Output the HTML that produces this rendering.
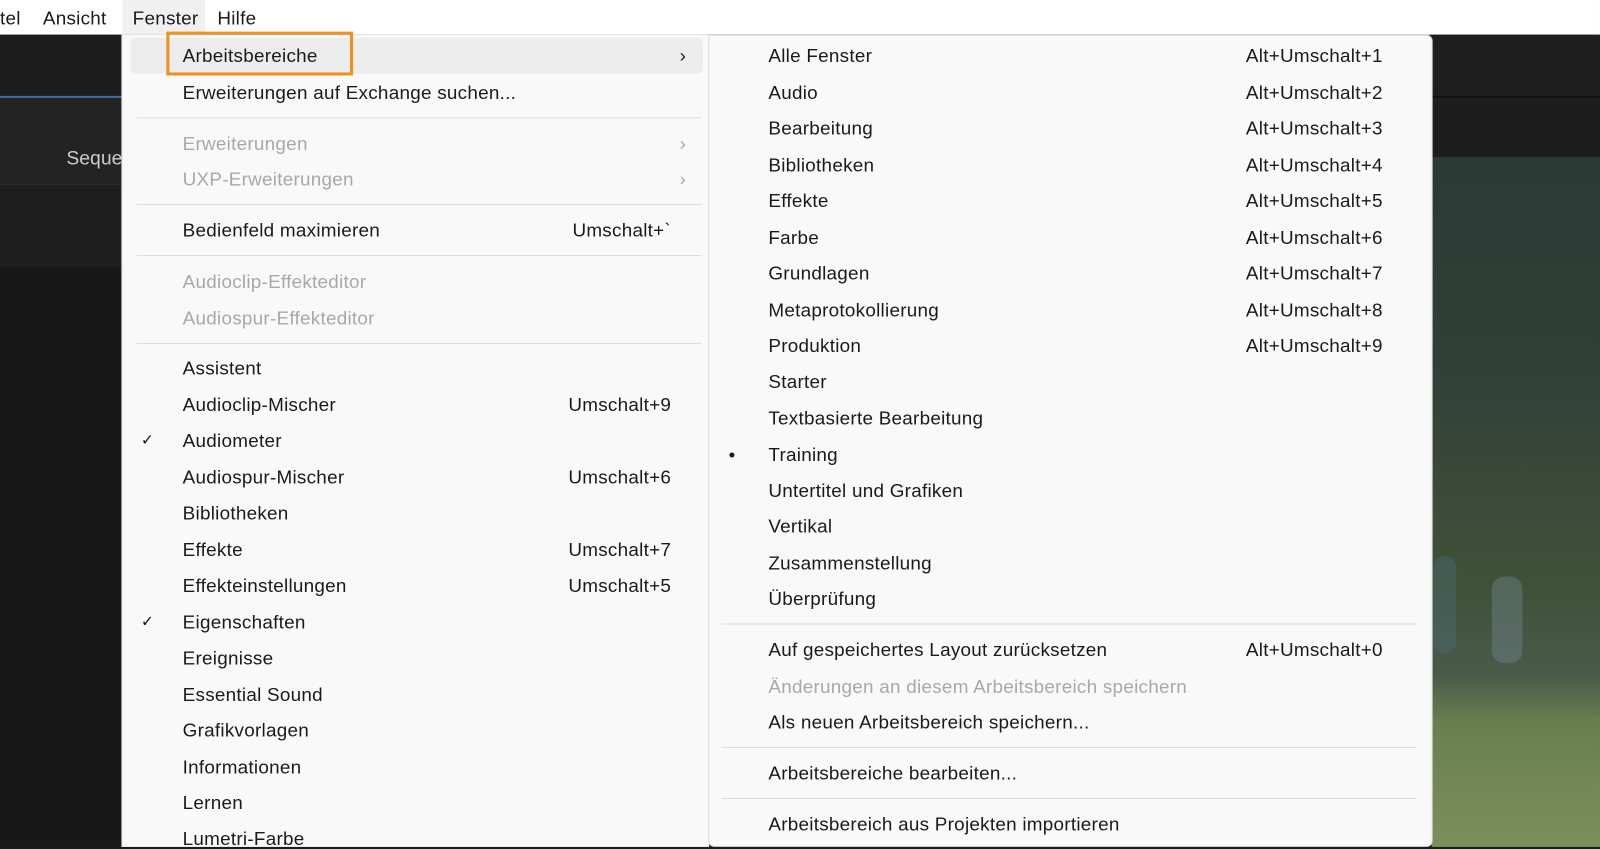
<!DOCTYPE html>
<html><head><meta charset="utf-8"><style>
html,body{margin:0;padding:0;width:1600px;height:847px;overflow:hidden;background:#1c1c1c}
#w{position:absolute;left:0;top:0;width:1568px;height:830px;transform:scale(1.0204);transform-origin:0 0;font-family:"Liberation Sans",sans-serif;}
.a{position:absolute}
.t{position:absolute;font-size:18.5px;color:#1a1a1a;white-space:nowrap;line-height:20px;transform:translateY(-9px);letter-spacing:0.25px}
.g{color:#a8a8a8}
.sep{position:absolute;height:1px;background:#dcdcdc}
</style></head><body><div id="w">
<div class="a" style="left:0;top:0;width:1568px;height:34px;background:#fff"></div>
<div class="a" style="left:120px;top:0;width:81px;height:34px;background:#f0f0f0"></div>
<div class="t" style="left:0;top:17px">tel</div>
<div class="t" style="left:42px;top:17px">Ansicht</div>
<div class="t" style="left:130px;top:17px">Fenster</div>
<div class="t" style="left:213px;top:17px">Hilfe</div>
<div class="a" style="left:0;top:34px;width:120px;height:796px;background:#1d1d1d"></div>
<div class="a" style="left:0;top:94px;width:120px;height:2px;background:#3d6ea8"></div>
<div class="a" style="left:0;top:96px;width:120px;height:84px;background:#232323"></div>
<div class="a" style="left:0;top:180px;width:120px;height:82px;background:#1f1f1f;border-top:1px solid #333"></div>
<div class="a" style="left:0;top:262px;width:120px;height:568px;background:#181818"></div>
<div class="a" style="left:65px;top:145px;color:#ccc;font-size:19px">Seque</div>
<div class="a" style="left:1403px;top:34px;width:165px;height:60px;background:#1e1e1e;border-bottom:2px solid #111"></div>
<div class="a" style="left:1403px;top:96px;width:165px;height:58px;background:#1d1d1d"></div>
<div class="a" style="left:1403px;top:154px;width:165px;height:676px;background:linear-gradient(180deg,#2a3a35 0%,#2f4038 30%,#3d4a3a 50%,#3f5238 62%,#4a5a4a 75%,#6a7f50 82%,#7a8f5a 100%)"></div>
<div class="a" style="left:1462px;top:565px;width:30px;height:85px;background:#7b8ea0;opacity:.35;border-radius:12px"></div>
<div class="a" style="left:1405px;top:545px;width:22px;height:95px;background:#4a7080;opacity:.35;border-radius:10px"></div>
<div class="a" style="left:119px;top:34px;width:575px;height:796px;background:#f9f9f9;border-left:1px solid #ddd"></div>
<div class="a" style="left:128px;top:37px;width:561px;height:35px;background:#ececec;border-radius:5px"></div>
<div class="a" style="left:163px;top:31px;width:177px;height:37px;border:3px solid #f0901e"></div>
<div class="t" style="left:179px;top:54px">Arbeitsbereiche</div><div class="t" style="left:666px;top:54px">›</div>
<div class="t" style="left:179px;top:90px">Erweiterungen auf Exchange suchen...</div>
<div class="sep" style="left:134px;top:115px;width:553px"></div>
<div class="t g" style="left:179px;top:140px">Erweiterungen</div><div class="t g" style="left:666px;top:140px">›</div>
<div class="t g" style="left:179px;top:175px">UXP-Erweiterungen</div><div class="t g" style="left:666px;top:175px">›</div>
<div class="sep" style="left:134px;top:200px;width:553px"></div>
<div class="t" style="left:179px;top:225px">Bedienfeld maximieren</div><div class="t" style="left:561px;top:225px">Umschalt+`</div>
<div class="sep" style="left:134px;top:250px;width:553px"></div>
<div class="t g" style="left:179px;top:275px">Audioclip-Effekteditor</div>
<div class="t g" style="left:179px;top:311px">Audiospur-Effekteditor</div>
<div class="sep" style="left:134px;top:336px;width:553px"></div>
<div class="t" style="left:179px;top:360px">Assistent</div>
<div class="t" style="left:179px;top:396px">Audioclip-Mischer</div><div class="t" style="left:557px;top:396px">Umschalt+9</div>
<div class="t" style="left:138px;top:431px;font-size:15px">✓</div><div class="t" style="left:179px;top:431px">Audiometer</div>
<div class="t" style="left:179px;top:467px">Audiospur-Mischer</div><div class="t" style="left:557px;top:467px">Umschalt+6</div>
<div class="t" style="left:179px;top:502px">Bibliotheken</div>
<div class="t" style="left:179px;top:538px">Effekte</div><div class="t" style="left:557px;top:538px">Umschalt+7</div>
<div class="t" style="left:179px;top:573px">Effekteinstellungen</div><div class="t" style="left:557px;top:573px">Umschalt+5</div>
<div class="t" style="left:138px;top:609px;font-size:15px">✓</div><div class="t" style="left:179px;top:609px">Eigenschaften</div>
<div class="t" style="left:179px;top:644px">Ereignisse</div>
<div class="t" style="left:179px;top:680px">Essential Sound</div>
<div class="t" style="left:179px;top:715px">Grafikvorlagen</div>
<div class="t" style="left:179px;top:751px">Informationen</div>
<div class="t" style="left:179px;top:786px">Lernen</div>
<div class="t" style="left:179px;top:821px">Lumetri-Farbe</div>
<div class="a" style="left:694px;top:34px;width:708px;height:794px;background:#f9f9f9;border:1px solid #ddd;border-radius:0 6px 6px 6px"></div>
<div class="t" style="left:753px;top:54px">Alle Fenster</div><div class="t" style="left:1221px;top:54px">Alt+Umschalt+1</div>
<div class="t" style="left:753px;top:90px">Audio</div><div class="t" style="left:1221px;top:90px">Alt+Umschalt+2</div>
<div class="t" style="left:753px;top:125px">Bearbeitung</div><div class="t" style="left:1221px;top:125px">Alt+Umschalt+3</div>
<div class="t" style="left:753px;top:161px">Bibliotheken</div><div class="t" style="left:1221px;top:161px">Alt+Umschalt+4</div>
<div class="t" style="left:753px;top:196px">Effekte</div><div class="t" style="left:1221px;top:196px">Alt+Umschalt+5</div>
<div class="t" style="left:753px;top:232px">Farbe</div><div class="t" style="left:1221px;top:232px">Alt+Umschalt+6</div>
<div class="t" style="left:753px;top:267px">Grundlagen</div><div class="t" style="left:1221px;top:267px">Alt+Umschalt+7</div>
<div class="t" style="left:753px;top:303px">Metaprotokollierung</div><div class="t" style="left:1221px;top:303px">Alt+Umschalt+8</div>
<div class="t" style="left:753px;top:338px">Produktion</div><div class="t" style="left:1221px;top:338px">Alt+Umschalt+9</div>
<div class="t" style="left:753px;top:373px">Starter</div>
<div class="t" style="left:753px;top:409px">Textbasierte Bearbeitung</div>
<div class="t" style="left:714px;top:445px">•</div><div class="t" style="left:753px;top:445px">Training</div>
<div class="t" style="left:753px;top:480px">Untertitel und Grafiken</div>
<div class="t" style="left:753px;top:515px">Vertikal</div>
<div class="t" style="left:753px;top:551px">Zusammenstellung</div>
<div class="t" style="left:753px;top:586px">Überprüfung</div>
<div class="sep" style="left:707px;top:611px;width:681px"></div>
<div class="t" style="left:753px;top:636px">Auf gespeichertes Layout zurücksetzen</div><div class="t" style="left:1221px;top:636px">Alt+Umschalt+0</div>
<div class="t g" style="left:753px;top:672px">Änderungen an diesem Arbeitsbereich speichern</div>
<div class="t" style="left:753px;top:707px">Als neuen Arbeitsbereich speichern...</div>
<div class="sep" style="left:707px;top:732px;width:681px"></div>
<div class="t" style="left:753px;top:757px">Arbeitsbereiche bearbeiten...</div>
<div class="sep" style="left:707px;top:782px;width:681px"></div>
<div class="t" style="left:753px;top:807px">Arbeitsbereich aus Projekten importieren</div>
</div></body></html>
